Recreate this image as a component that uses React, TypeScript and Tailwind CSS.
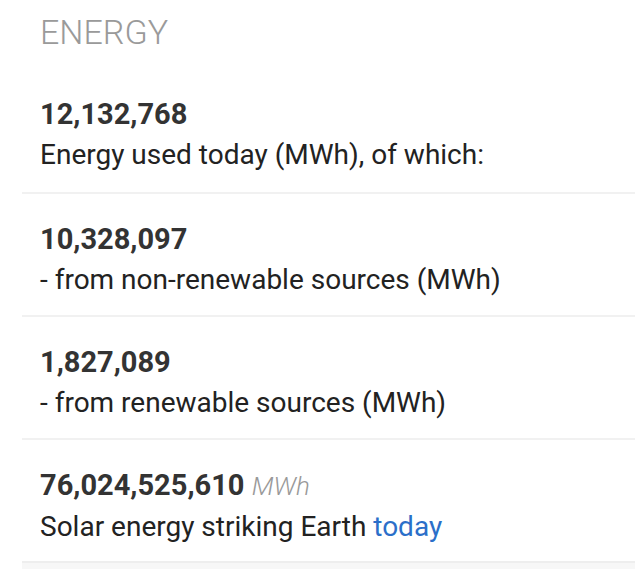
export default function App() {
  const rows = [
    { n: "10,328,097", d: <>- from non-renewable sources (MWh)</> },
    { n: "1,827,089", d: <>- from renewable sources (MWh)</> },
  ];
  return (
    <div className="w-[635px] h-[569px] bg-white overflow-hidden" style={{ fontFamily: "Roboto, 'Liberation Sans', sans-serif" }}>
      <div className="pl-[40px] pt-[12px] text-[34px] leading-[40px] font-light text-[#9a9a9a]">ENERGY</div>
      <div className="pl-[22px]">
        <div className="pl-[18px] pt-[44px] pb-[19px] border-b-2 border-[#f1f1f1]">
          <div className="text-[29px] leading-[36px] font-bold text-[#333]">12,132,768</div>
          <div className="mt-[5px] text-[28px] leading-[36px] text-[#222]">Energy used today (MWh), of which:</div>
        </div>
        {rows.map((r) => (
          <div key={r.n} className="pl-[18px] pt-[27px] pb-[17px] border-b-2 border-[#f1f1f1]">
            <div className="text-[29px] leading-[36px] font-bold text-[#333]">{r.n}</div>
            <div className="mt-[5px] text-[28px] leading-[36px] text-[#222]">{r.d}</div>
          </div>
        ))}
        <div className="pl-[18px] pt-[27px] pb-[16px] border-b-2 border-[#eeeeee]">
          <div className="text-[29px] leading-[36px] font-bold text-[#333]">
            76,024,525,610 <span className="text-[26px] font-light italic text-[#999]">MWh</span>
          </div>
          <div className="mt-[5px] text-[28px] leading-[36px] text-[#222]">
            Solar energy striking Earth <span className="text-[#2b6fc9]">today</span>
          </div>
        </div>
        <div className="h-[20px] bg-[#f7f7f7]" />
      </div>
    </div>
  );
}
